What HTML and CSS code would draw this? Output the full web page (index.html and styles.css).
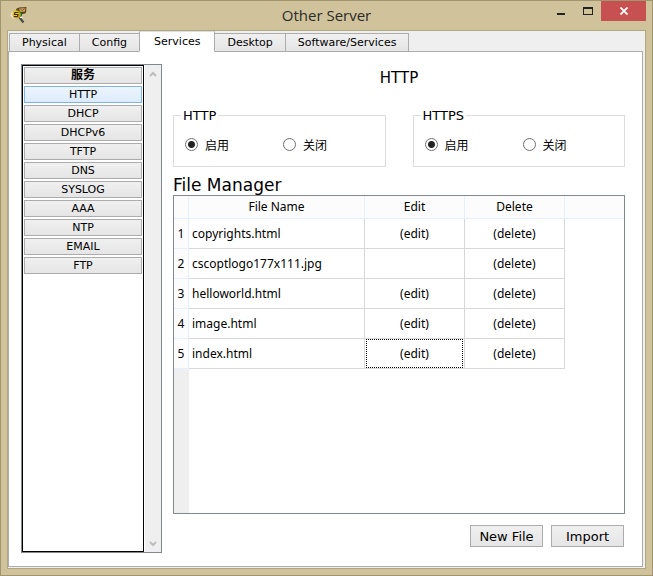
FILE: index.html
```html
<!DOCTYPE html>
<html lang="zh-CN">
<head>
<meta charset="utf-8">
<title>Other Server</title>
<link rel="stylesheet" href="styles.css">
</head>
<body>
<div class="window">
  <header class="titlebar">
    <svg class="app-icon" viewBox="0 0 18 18" aria-hidden="true">
      <path d="M6 3 9 1.500 16.500 1 16 7 10 9Z" fill="#5f4317"/>
      <path d="M9 2.500 15.500 2 15 5.500 10 6Z" fill="#cda66a"/>
      <path d="M10 2.500 12 4.500 15.500 2" fill="none" stroke="#7d5a25"/>
      <path d="M6 3.500 9 5 12 6.500 12 10 9 11Z" fill="#1d6a25"/>
      <ellipse cx="5.500" cy="9" rx="5" ry="4" fill="#e8e6de"/>
      <circle cx="6.500" cy="8.500" r="4" fill="#c89b0c"/>
      <circle cx="6" cy="8" r="3" fill="#f0cb1c"/>
      <path d="M8.500 6.500H5L4.500 8.500H8L7.500 10.500H4" fill="none" stroke="#3f3004" stroke-width="1.200"/>
      <path d="M9.500 11.500 13.500 16.500" stroke="#4a4e48" stroke-width="2.200"/>
      <path d="M10 11.500H12.500" stroke="#f4f4f0"/>
    </svg>
    <h1 class="window-title">Other Server</h1>
    <div class="window-controls">
      <button class="control" type="button" aria-label="Minimize"><svg width="10" height="10" viewBox="0 0 10 10"><path d="M1 7H9V9H1Z" fill="#222"/></svg></button>
      <button class="control" type="button" aria-label="Maximize"><svg width="10" height="10" viewBox="0 0 10 10"><path d="M0 1H10V9H0ZM1 3V8H9V3Z" fill="#222" fill-rule="evenodd"/></svg></button>
      <button class="control close" type="button" aria-label="Close"><svg width="8" height="8" viewBox="0 0 8 8"><path d="M.5.5 7.500 7.500M7.500.5.5 7.500" stroke="#fff" stroke-width="1.800"/></svg></button>
    </div>
  </header>
  <div class="client">
    <nav class="tabs">
      <button class="tab" type="button">Physical</button>
      <button class="tab" type="button">Config</button>
      <button class="tab active" type="button">Services</button>
      <button class="tab" type="button">Desktop</button>
      <button class="tab" type="button">Software/Services</button>
    </nav>
    <main class="pane">
      <aside class="sidebar">
        <div class="services">
          <button class="service heading" type="button">服务</button>
          <button class="service selected" type="button">HTTP</button>
          <button class="service" type="button">DHCP</button>
          <button class="service" type="button">DHCPv6</button>
          <button class="service" type="button">TFTP</button>
          <button class="service" type="button">DNS</button>
          <button class="service" type="button">SYSLOG</button>
          <button class="service" type="button">AAA</button>
          <button class="service" type="button">NTP</button>
          <button class="service" type="button">EMAIL</button>
          <button class="service" type="button">FTP</button>
        </div>
        <div class="scrollbar">
          <svg width="8" height="6" viewBox="0 0 8 6"><path d="M1 5 4 2 7 5" fill="none" stroke="#bdbdbd" stroke-width="2"/></svg>
          <svg width="8" height="6" viewBox="0 0 8 6"><path d="M1 1 4 4 7 1" fill="none" stroke="#bdbdbd" stroke-width="2"/></svg>
        </div>
      </aside>
      <section class="content">
        <h2 class="content-title">HTTP</h2>
        <div class="groups">
          <fieldset class="group">
            <legend>HTTP</legend>
            <div class="choices">
              <label class="choice"><input type="radio" name="http" checked>启用</label>
              <label class="choice"><input type="radio" name="http">关闭</label>
            </div>
          </fieldset>
          <fieldset class="group">
            <legend>HTTPS</legend>
            <div class="choices">
              <label class="choice"><input type="radio" name="https" checked>启用</label>
              <label class="choice"><input type="radio" name="https">关闭</label>
            </div>
          </fieldset>
        </div>
        <h3 class="section-title">File Manager</h3>
        <div class="files">
          <table>
            <colgroup><col class="col-num"><col class="col-name"><col class="col-action"><col class="col-action"><col></colgroup>
            <thead>
              <tr><th></th><th>File Name</th><th>Edit</th><th>Delete</th><th class="filler"></th></tr>
            </thead>
            <tbody>
              <tr><th>1</th><td class="name">copyrights.html</td><td><button type="button">(edit)</button></td><td><button type="button">(delete)</button></td><td class="filler"></td></tr>
              <tr><th>2</th><td class="name">cscoptlogo177x111.jpg</td><td></td><td><button type="button">(delete)</button></td><td class="filler"></td></tr>
              <tr><th>3</th><td class="name">helloworld.html</td><td><button type="button">(edit)</button></td><td><button type="button">(delete)</button></td><td class="filler"></td></tr>
              <tr><th>4</th><td class="name">image.html</td><td><button type="button">(edit)</button></td><td><button type="button">(delete)</button></td><td class="filler"></td></tr>
              <tr><th>5</th><td class="name">index.html</td><td><button class="current" type="button">(edit)</button></td><td><button type="button">(delete)</button></td><td class="filler"></td></tr>
            </tbody>
          </table>
        </div>
        <div class="actions">
          <button class="action" type="button">New File</button>
          <button class="action" type="button">Import</button>
        </div>
      </section>
    </main>
  </div>
</div>
</body>
</html>
```

FILE: styles.css
```css
* {
  box-sizing: border-box;
}

body {
  margin: 0;
  color: #000;
  font-family: "DejaVu Sans", "Noto Sans CJK SC", sans-serif;
  font-size: 13px;
}

button {
  margin: 0;
  padding: 0;
  border: 0;
  background: none;
  color: inherit;
  font: inherit;
}

h1, h2, h3 {
  margin: 0;
  font-weight: 400;
}

.window {
  display: flex;
  flex-direction: column;
  min-height: 100vh;
  padding: 0 6px 6px;
  border: 1px solid #a0956f;
  background: #d0c39b;
}

.titlebar {
  display: grid;
  grid-template-columns: 135px 1fr 135px;
  height: 29px;
}

.app-icon {
  width: 18px;
  height: 18px;
  margin: 5px 0 0 3px;
}

.window-title {
  color: #2b2b2b;
  font-family: "Open Sans", "Noto Sans", sans-serif;
  font-size: 15px;
  line-height: 29px;
  text-align: center;
}

.window-controls {
  display: flex;
  justify-content: flex-end;
  height: 20px;
}

.control {
  display: flex;
  align-items: center;
  justify-content: center;
  width: 27px;
}

.close {
  width: 45px;
  background: #c75050;
}

.client {
  display: flex;
  flex: 1;
  flex-direction: column;
  padding: 0 2px 1px 0;
  border: 1px solid #b0a680;
  background: #efefef;
}

.tabs {
  display: flex;
  align-items: flex-end;
  height: 21px;
  padding-left: 1px;
}

.tab {
  height: 19px;
  margin-right: -1px;
  padding: 0 12px;
  border: 1px solid #acacac;
  background: linear-gradient(#f0f0f0, #e5e5e5);
  font-size: 11px;
  line-height: 17px;
}

.tab.active {
  z-index: 1;
  height: 21px;
  padding: 0 14px;
  border-color: #dcdcdc #acacac #fff;
  background: #fff;
  line-height: 19px;
}

.pane {
  display: flex;
  flex: 1;
  gap: 11px;
  margin-top: -1px;
  padding: 12px 17px 13px 12px;
  border: 1px solid #acacac;
  background: #fff;
}

.sidebar {
  display: flex;
  flex: 0 0 141px;
  gap: 1px;
  border: 1px solid #828790;
}

.services {
  display: flex;
  flex: 1;
  flex-direction: column;
  gap: 2px;
  padding: 1px;
  border: 1px solid #000;
}

.service {
  height: 17px;
  border: 1px solid #acacac;
  background: linear-gradient(#f0f0f0, #e5e5e5);
  font-size: 11px;
  line-height: 15px;
}

.heading {
  font-weight: 700;
  font-size: 12px;
}

.selected {
  border-color: #7eb4ea;
  background: linear-gradient(#ecf4fc, #dcecfc);
}

.scrollbar {
  display: flex;
  flex-direction: column;
  align-items: center;
  justify-content: space-between;
  width: 16px;
  padding: 6px 0 5px;
  background: #efefef;
}

.content {
  display: flex;
  flex: 1;
  flex-direction: column;
  min-width: 0;
  padding-bottom: 6px;
}

.content-title {
  font-size: 15px;
  line-height: 28px;
  text-align: center;
}

.groups {
  display: grid;
  grid-template-columns: 1fr 1fr;
  gap: 27px;
  margin-top: 15px;
}

.group {
  min-width: 0;
  height: 60px;
  margin: 0;
  padding: 0 11px;
  border: 1px solid #dcdcdc;
}

.group legend {
  margin-left: -4px;
  padding: 0 2px;
  line-height: 17px;
}

.choices {
  display: grid;
  grid-template-columns: 98px 1fr;
  padding-top: 11px;
}

.choice {
  display: flex;
  align-items: center;
  gap: 7px;
  height: 18px;
  font-family: "Noto Sans CJK SC", sans-serif;
  font-size: 12px;
}

.choice input {
  width: 13px;
  height: 13px;
  margin: 0;
  border: 1px solid #707070;
  border-radius: 50%;
  background: #fff;
  appearance: none;
}

.choice input:checked {
  background: radial-gradient(circle, #222 3px, #fff 4px);
}

.section-title {
  margin-top: 9px;
  font-size: 17px;
  line-height: 19px;
}

.files {
  flex: 1;
  border: 1px solid #828790;
  background: linear-gradient(to right, #efefef 15px, #fff 15px);
}

table {
  width: 100%;
  border-spacing: 0;
  table-layout: fixed;
  font-family: "Noto Sans", "Open Sans", sans-serif;
  font-size: 12px;
}

.col-num {
  width: 15px;
}

.col-name {
  width: 176px;
}

.col-action {
  width: 100px;
}

th {
  padding: 0;
  border: solid #e5f0ff;
  border-width: 0 1px 1px 0;
  background: #fcfcfc;
  font-weight: 400;
}

thead th {
  height: 23px;
  line-height: 22px;
}

tbody th,
td {
  height: 30px;
  line-height: 29px;
}

td {
  padding: 0 1px;
  border: solid #d8d8d8;
  border-width: 0 1px 1px 0;
  background: #fff;
  text-align: center;
}

td.name {
  padding: 0 3px;
  text-align: left;
}

td.filler {
  border: 0;
}

th.filler {
  border-right: 0;
}

td button {
  display: block;
  width: 100%;
  height: 29px;
}

td .current {
  border: 1px dotted #000;
  line-height: 27px;
}

.actions {
  display: flex;
  justify-content: flex-end;
  gap: 8px;
  margin-top: 11px;
  padding-right: 1px;
}

.action {
  width: 73px;
  height: 22px;
  border: 1px solid #acacac;
  background: linear-gradient(#f0f0f0, #e5e5e5);
}
```
